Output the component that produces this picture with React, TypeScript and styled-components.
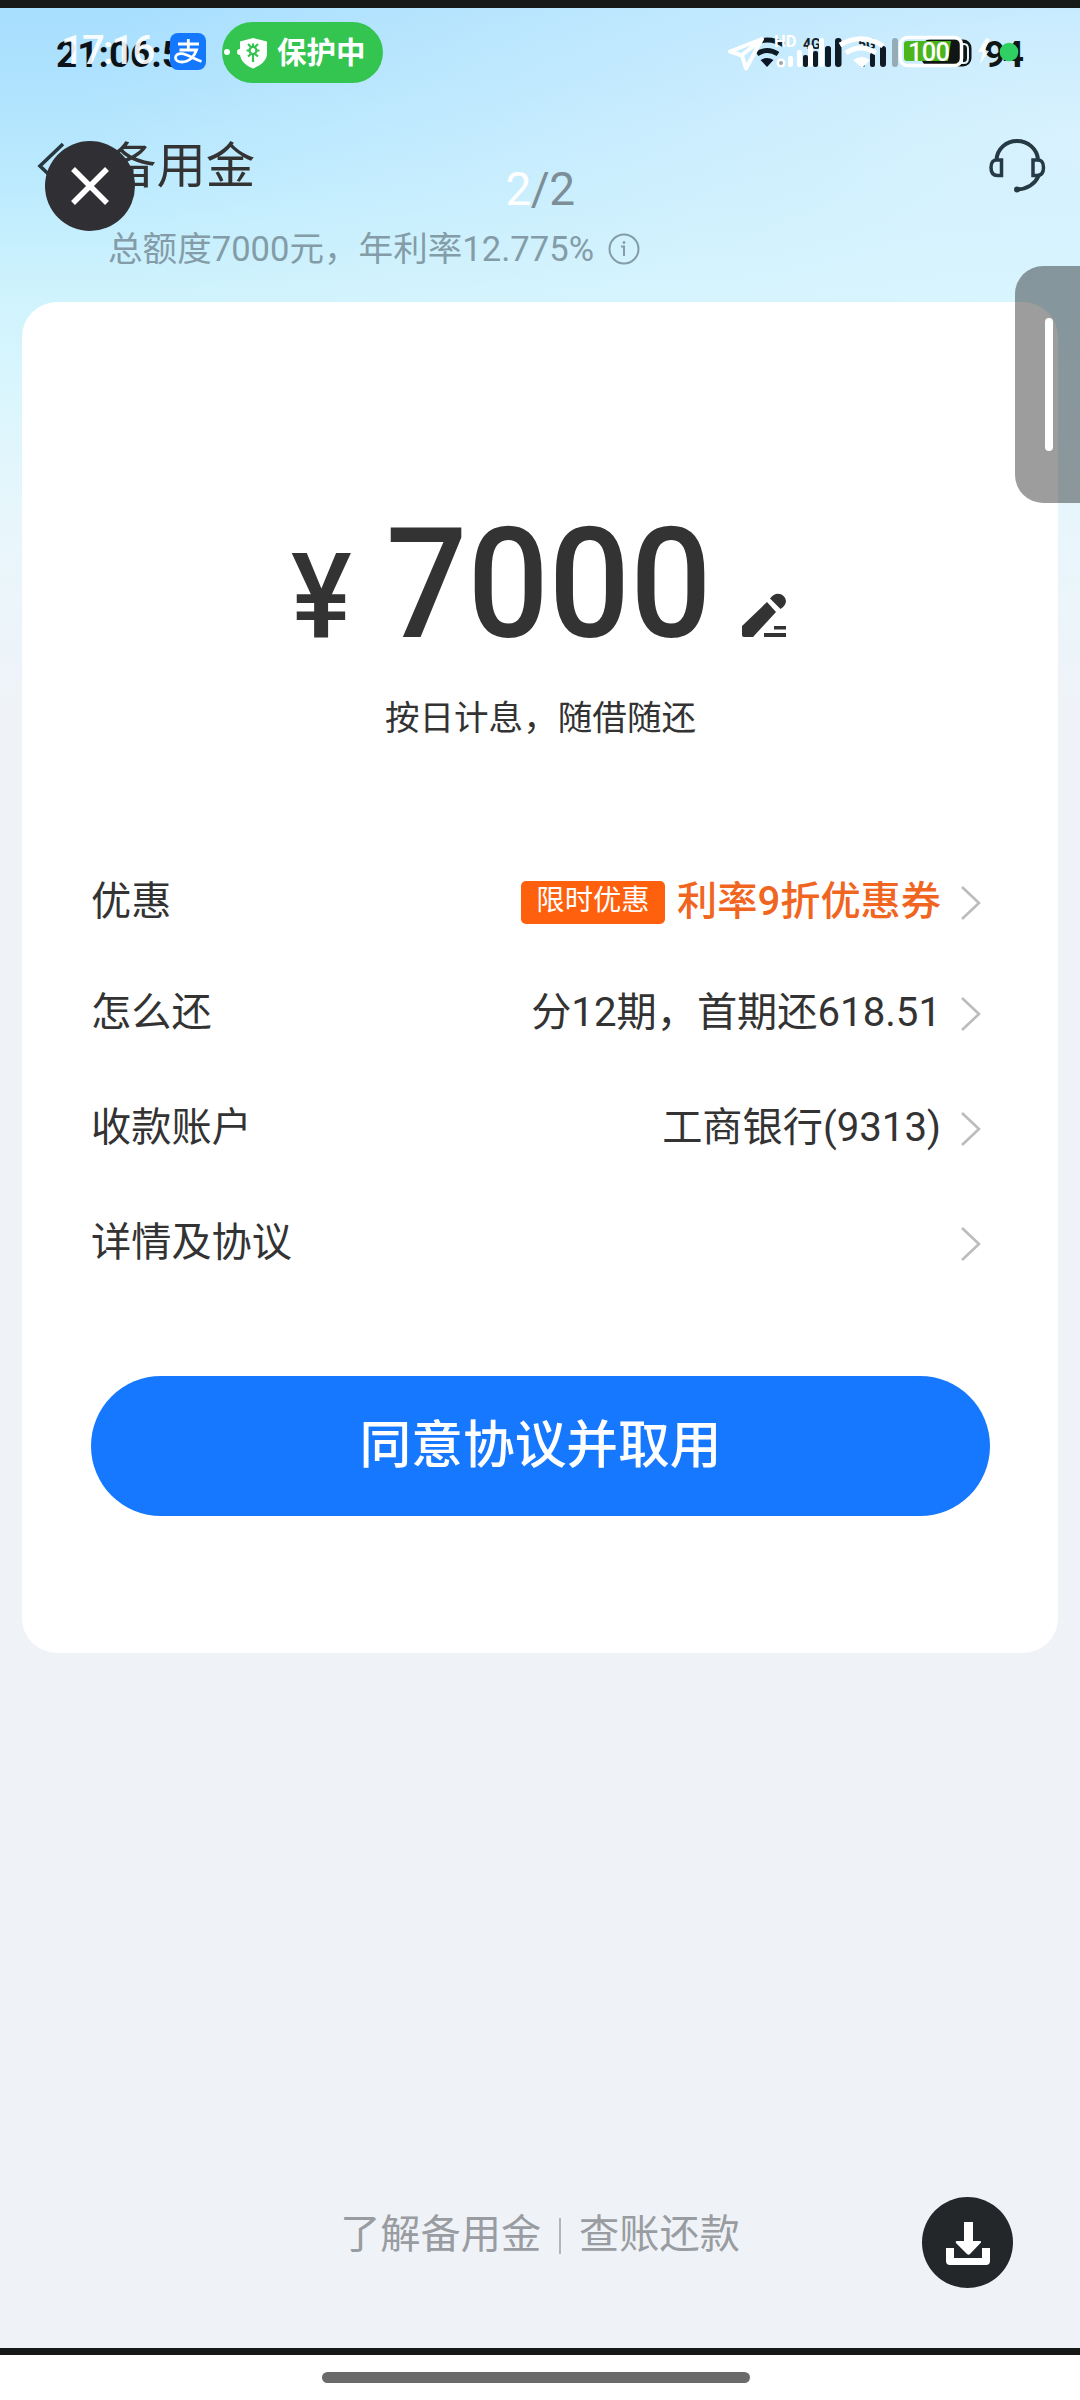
import React from "react";
import styled, { createGlobalStyle } from "styled-components";

const Global = createGlobalStyle`
  * { box-sizing: border-box; }
  html, body { margin: 0; padding: 0; }
  body { font-family: Roboto, "Noto Sans CJK SC", sans-serif; color: #333; background: #fff; }
  svg { display: block; flex: none; }
`;

const Page = styled.div`
  width: 1080px;
  height: 2400px;
  display: flex;
  flex-direction: column;
  overflow: hidden;
`;

const Edge = styled.div<{ $h: number }>`
  flex: none;
  height: ${(p) => p.$h}px;
  background: #171918;
`;

const Screen = styled.main`
  position: relative;
  flex: 1;
  display: flex;
  flex-direction: column;
  background:
    radial-gradient(ellipse 1000px 420px at 1080px 130px, rgba(226, 245, 254, 0.78), rgba(226, 245, 254, 0) 100%),
    linear-gradient(180deg, #a8dffe 0, #aee2fe 70px, #bdebfe 180px, #cff3fd 285px, #dcf6fd 400px, #e8f6fb 520px, #eff3f8 700px, #eff3f8 100%);
`;

const StatusBar = styled.div`
  height: 90px;
  display: flex;
  align-items: flex-start;
  padding: 14px 50px 0 57px;
`;

const Clock = styled.div`
  position: relative;
  width: 113px;
  height: 62px;
`;

const ClockText = styled.span<{ $ghost?: boolean }>`
  position: absolute;
  white-space: nowrap;
  left: ${(p) => (p.$ghost ? 4 : -1)}px;
  top: ${(p) => (p.$ghost ? 9 : 13)}px;
  font-size: ${(p) => (p.$ghost ? 40 : 37)}px;
  line-height: 40px;
  font-weight: ${(p) => (p.$ghost ? 500 : 700)};
  letter-spacing: ${(p) => (p.$ghost ? -1.8 : 0)}px;
  color: ${(p) => (p.$ghost ? "rgba(255,255,255,.93)" : "#0b1318")};
`;

const PayBadge = styled.div`
  position: relative;
  width: 36px;
  height: 37px;
  margin: 11px 16px 0 0;
  border-radius: 8px;
  background: #1478ff;
`;

const GuardPill = styled.div`
  width: 161px;
  height: 61px;
  border-radius: 31px;
  background: #34c550;
  display: flex;
  align-items: center;
  color: #fff;
  font-size: 29.5px;
  line-height: 62px;
  font-weight: 700;
  padding-left: 2px;
  gap: 9px;
  white-space: nowrap;
`;

const StatusIcons = styled.div`
  margin-left: auto;
  padding-top: 6px;
`;

const Header = styled.header`
  height: 204px;
  display: flex;
  flex-direction: column;
  padding: 36px 34px 0 37px;
`;

const TitleRow = styled.div`
  height: 64px;
  display: flex;
  align-items: center;
`;

const Title = styled.h1`
  flex: 1;
  margin: 0 0 0 38px;
  font-size: 49.4px;
  line-height: 64px;
  font-weight: 400;
`;

const Quota = styled.div`
  display: flex;
  align-items: center;
  gap: 14px;
  margin: 29px 0 0 71px;
  font-size: 34.6px;
  line-height: 44px;
  color: #849ca7;
`;

const Card = styled.section`
  margin: 0 22px;
  height: 1351px;
  border-radius: 35px;
  background: #fff;
  padding: 208px 68px 0 69px;
  display: flex;
  flex-direction: column;
`;

const Amount = styled.div`
  height: 150px;
  display: flex;
  align-items: baseline;
  padding-left: 200px;
  font-weight: 550;
  white-space: nowrap;
`;

const Squeeze = styled.span<{ $size: number; $w: number; $sx: number }>`
  display: block;
  width: ${(p) => p.$w}px;
  font-size: ${(p) => p.$size}px;
  line-height: 150px;
  transform: scaleX(${(p) => p.$sx});
  transform-origin: 0 50%;
`;

const Hint = styled.p`
  margin: 36px 0 0;
  text-align: center;
  font-size: 34.6px;
  line-height: 44px;
`;

const Rows = styled.div`
  margin-top: 104px;
  display: flex;
  flex-direction: column;
`;

const Row = styled.div<{ $h: number }>`
  height: ${(p) => p.$h}px;
  display: flex;
  align-items: flex-start;
  font-size: 40.2px;
  line-height: 116px;
`;

const Value = styled.div<{ $hot?: boolean }>`
  margin-left: auto;
  margin-right: 20px;
  display: flex;
  align-items: center;
  gap: 12px;
  height: 116px;
  font-weight: ${(p) => (p.$hot ? 500 : 400)};
  color: ${(p) => (p.$hot ? "#f0651f" : "#333")};
`;

const Tag = styled.span`
  height: 43px;
  padding: 0 15.5px;
  border-radius: 5px;
  background: #ff600e;
  color: #fff;
  font-size: 28.3px;
  line-height: 40px;
  font-weight: 400;
`;

const RowArrow = styled.div`
  height: 117px;
  width: 29px;
  display: flex;
  align-items: center;
`;

const Submit = styled.button`
  margin: 71px 0 0;
  height: 140px;
  border: 0;
  border-radius: 70px;
  background: #1678ff;
  color: #fff;
  font: 500 51.7px/136px Roboto, "Noto Sans CJK SC", sans-serif;
`;

const Footer = styled.footer`
  margin-top: auto;
  height: 138px;
  display: flex;
  justify-content: center;
  align-items: flex-start;
  font-size: 40.2px;
  line-height: 50px;
  color: #999ca0;
`;

const Divider = styled.i`
  width: 2px;
  height: 36px;
  margin: 8px 18px 0;
  background: #b3b6ba;
`;

const NavArea = styled.div`
  flex: none;
  height: 45px;
  display: flex;
  justify-content: center;
  padding: 17px 8px 0 0;
  background: #fff;
`;

const NavBar = styled.div`
  width: 428px;
  height: 11px;
  border-radius: 6px;
  background: #6a6a6a;
`;

const Round = styled.button<{ $x: number; $y: number; $s: number; $c: string }>`
  position: absolute;
  left: ${(p) => p.$x}px;
  top: ${(p) => p.$y}px;
  width: ${(p) => p.$s}px;
  height: ${(p) => p.$s}px;
  border: 0;
  padding: 0;
  border-radius: 50%;
  background: ${(p) => p.$c};
  display: flex;
  align-items: center;
  justify-content: center;
`;

const Counter = styled.div`
  position: absolute;
  left: 0;
  right: 0;
  top: 153px;
  text-align: center;
  font-size: 46px;
  line-height: 56px;
  letter-spacing: -0.5px;
  color: #7d8e97;
  b { font-weight: 400; color: #fff; }
`;

const Handle = styled.div`
  position: absolute;
  right: 0;
  top: 258px;
  width: 65px;
  height: 237px;
  border-radius: 28px 0 0 28px;
  background: rgba(0, 0, 0, 0.385);
  display: flex;
  align-items: center;
  padding-left: 30px;
  &::before {
    content: "";
    width: 8px;
    height: 133px;
    border-radius: 4px;
    background: #fff;
  }
`;

const PayIcon = () => (
  <svg width="36" height="37" viewBox="0 0 36 37" fill="none" stroke="#fff" strokeWidth="2.8">
    <path d="M8 11h21M18.300 6v11M9.500 17h17c-2 6-7 12-14.500 12-4 0-6.500-1.500-6.500-4.200 0-3 3-4.300 6-4.100 5.500.4 11 4.300 20 7.800" />
  </svg>
);

const Shield = () => (
  <svg width="44" height="36" viewBox="0 0 44 36">
    <circle cx="3" cy="17" r="3" fill="#fff" />
    <circle cx="16" cy="17" r="3" fill="#fff" />
    <path d="M29 3l14 3.500v12c0 7-6.500 12-14 15-7.500-3-13-8-13-15v-12z" fill="#fff" />
    <g stroke="#34c550" strokeWidth="2.200" fill="none">
      <path d="M24 9l4 4M34 9l-4 4M29 8.500V12M22.500 15.500h4M31.500 15.500h4M29 19v8M24 21.500l3.500-3M34 21.500l-3.500-3" />
      <circle cx="29" cy="15.500" r="3.500" />
    </g>
  </svg>
);

const StatusGlyphs = () => (
  <svg width="305" height="48" viewBox="725 28 305 48" fontFamily="Roboto, sans-serif">
    <g fill="none" stroke="#0f1b24" strokeWidth="5">
      <path d="M751 45q16-10 33 0M757 54q10-7 21 0" />
    </g>
    <path d="M760.500 60q6.500-4 13 0l-6.500 7z" fill="#0b1528" />
    <text x="803" y="49" fontSize="14" fontWeight="700" fill="#15222a">4G</text>
    <g fill="#0f1b24">
      <rect x="803" y="55" width="5" height="12" rx="2" />
      <rect x="813" y="51" width="5" height="16" rx="2" />
      <rect x="825" y="46" width="6" height="21" rx="2.500" />
      <rect x="835" y="38" width="6.500" height="29" rx="3" />
    </g>
    <g fill="#fff">
      <text x="774" y="47" fontSize="16.500" fontWeight="700">HD</text>
      <rect x="788" y="56" width="5" height="11" rx="2" />
      <rect x="797" y="50" width="5" height="17" rx="2" />
      <rect x="808" y="45" width="5" height="22" rx="2" />
      <rect x="819" y="38" width="5" height="29" rx="2" />
      <circle cx="781" cy="63" r="4.500" />
    </g>
    <circle cx="781" cy="63" r="2" fill="#9aa8ae" />
    <path d="M730 51.500l32-12.500-16 29.500-4-13zM742 55l19-15" fill="none" stroke="#fff" strokeWidth="4" strokeLinejoin="round" />
    <g fill="#0f1b24">
      <text x="858" y="49" fontSize="14" fontWeight="700">5G</text>
      <rect x="860" y="58" width="5" height="9" rx="2" />
      <rect x="870" y="53" width="5" height="14" rx="2" />
      <rect x="880" y="46" width="6" height="21" rx="3" />
    </g>
    <g fill="none" stroke="#fff" strokeWidth="5">
      <path d="M840 45q22-13 43 1M846 53q15-10 30 0" />
    </g>
    <path d="M853 60q9-6 17 0l-8 8z" fill="#fff" />
    <rect x="892" y="38" width="6" height="29" rx="3" fill="#95abb5" />
    <rect x="923" y="41" width="47" height="24" rx="7" fill="#101613" stroke="#101613" strokeWidth="3" />
    <path d="M962 44h2q4 0 4 5v9q0 5-4 5h-2z" fill="none" stroke="#dff4fb" strokeWidth="2" />
    <rect x="904" y="41" width="51" height="20" rx="3" fill="#4db51c" />
    <path d="M951 41h6v20h-9z" fill="#101613" />
    <rect x="900.500" y="37.500" width="61" height="28" rx="7" fill="none" stroke="#fff" strokeWidth="3.500" />
    <text x="908" y="61" fontSize="25.500" textLength="42" fontWeight="500" fill="#fff">100</text>
    <text x="984" y="67" fontSize="37.500" fontWeight="700" fill="#0f1613">9</text>
    <text x="1002.500" y="67" fontSize="37.500" fontWeight="700" fill="#0f1613">4</text>
    <path d="M986 38l-8 14h5l-3 12 9-13-4-1 5-11z" fill="#fff" fillOpacity=".85" />
    <circle cx="1009" cy="52" r="9.300" fill="#2fcf63" />
  </svg>
);

const BackIcon = () => (
  <svg width="32" height="52" viewBox="0 0 32 52" fill="none" stroke="#27383f" strokeWidth="3.600">
    <path d="M26 4L3 26l23 22" />
  </svg>
);

const HeadsetIcon = () => (
  <svg width="58" height="56" viewBox="0 0 58 56" fill="none" stroke="#263a44" strokeWidth="4">
    <path d="M8.500 22C9 11 18 3 29 3s20.500 8 21 19" />
    <path d="M13.500 22v15.500H9.500Q3 37.500 3 29.500T9.500 22zM45 22v15.500h4q6.500 0 6.500-8T49 22z" strokeWidth="3.500" />
    <path d="M50.500 38C47 46 39 51 29 51.500" />
    <circle cx="29" cy="51.500" r="2.200" fill="#263a44" strokeWidth="1.500" />
  </svg>
);

const InfoIcon = () => (
  <svg width="32" height="32" viewBox="0 0 32 32" fill="none" stroke="#849ca7" strokeWidth="2">
    <circle cx="16" cy="16" r="14.500" />
    <path d="M13 13.500H16V23" />
    <circle cx="16" cy="9.500" r="1" fill="#849ca7" strokeWidth="1" />
  </svg>
);

const PencilIcon = () => (
  <svg width="46" height="44" viewBox="0 0 46 44" fill="#333">
    <path d="M1 33L26 9l9 10L12 44H3q-2 0-2-2z" />
    <path d="M29 5.500c4-6 10-6 13.500-2.500 4 4 3 9.500-3 13z" />
    <path d="M33 33h12v3.500H33zM23 40h22v4H23z" />
  </svg>
);

const Chevron = () => (
  <svg width="20" height="36" viewBox="0 0 20 36" fill="none" stroke="#bcbcbc" strokeWidth="2.600">
    <path d="M1 2l17 16L1 34" />
  </svg>
);

const CloseIcon = () => (
  <svg width="40" height="40" viewBox="0 0 40 40" stroke="#fff" strokeWidth="5.500">
    <path d="M3 3l34 34M37 3L3 37" />
  </svg>
);

const DownloadIcon = () => (
  <svg width="46" height="46" viewBox="0 0 46 46" fill="#fff">
    <path d="M19 2h9v19h7q2 0 .5 2L25 34q-1.500 1.500-3 0L11 23q-1-2 1-2h7z" />
    <path d="M1 28h8v10h28V28h8v13q0 4-4 4H5q-4 0-4-4z" />
  </svg>
);

export default function App() {
  return (
    <Page>
      <Global />
      <Edge $h={8} />
      <Screen>
        <StatusBar>
          <Clock>
            <ClockText>21:06:5</ClockText>
            <ClockText $ghost>17:16</ClockText>
          </Clock>
          <PayBadge>
            <PayIcon />
          </PayBadge>
          <GuardPill>
            <Shield />
            保护中
          </GuardPill>
          <StatusIcons>
            <StatusGlyphs />
          </StatusIcons>
        </StatusBar>
        <Header>
          <TitleRow>
            <BackIcon />
            <Title>备用金</Title>
            <HeadsetIcon />
          </TitleRow>
          <Quota>
            总额度7000元，年利率12.775%
            <InfoIcon />
          </Quota>
        </Header>
        <Card>
          <Amount>
            <Squeeze $size={119} $w={95} $sx={0.96}>¥</Squeeze>
            <Squeeze $size={154} $w={355} $sx={0.93}>7000</Squeeze>
            <PencilIcon />
          </Amount>
          <Hint>按日计息，随借随还</Hint>
          <Rows>
            <Row $h={111}>
              优惠
              <Value $hot>
                <Tag>限时优惠</Tag>
                利率9折优惠券
              </Value>
              <RowArrow><Chevron /></RowArrow>
            </Row>
            <Row $h={115}>
              怎么还
              <Value>分12期，首期还618.51</Value>
              <RowArrow><Chevron /></RowArrow>
            </Row>
            <Row $h={115}>
              收款账户
              <Value>工商银行(9313)</Value>
              <RowArrow><Chevron /></RowArrow>
            </Row>
            <Row $h={120}>
              详情及协议
              <Value />
              <RowArrow><Chevron /></RowArrow>
            </Row>
          </Rows>
          <Submit>同意协议并取用</Submit>
        </Card>
        <Footer>
          了解备用金
          <Divider />
          查账还款
        </Footer>
        <Counter><b>2</b>/2</Counter>
        <Round $x={45} $y={133} $s={90} $c="#303034"><CloseIcon /></Round>
        <Handle />
        <Round $x={922} $y={2189} $s={91} $c="#24272a"><DownloadIcon /></Round>
      </Screen>
      <Edge $h={7} />
      <NavArea>
        <NavBar />
      </NavArea>
    </Page>
  );
}
